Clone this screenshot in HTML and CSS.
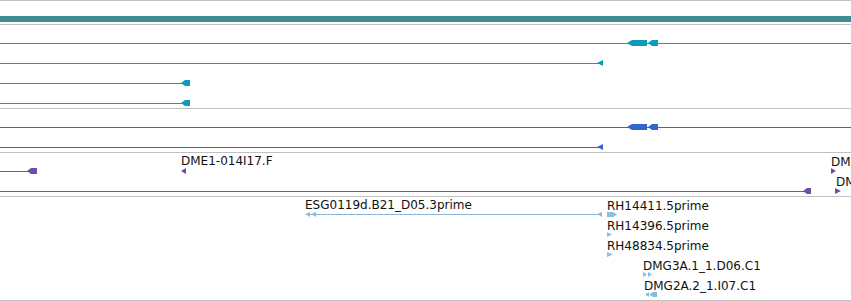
FILE: index.html
```html
<!DOCTYPE html>
<html lang="en">
<head>
    <meta charset="UTF-8">
    <title>Track view</title>
    <link rel="stylesheet" href="styles.css">
</head>
<body>
    <div class="tracks">
        <div class="track track-summary">
            <svg width="851" height="23">
                <rect class="summary-bar" x="0" y="15" width="851" height="6"/>
            </svg>
        </div>

        <div class="track track-teal">
            <svg width="851" height="83">
                <line class="teal-line" x1="0" y1="18.5" x2="851" y2="18.5"/>
                <polygon class="teal-fill" points="627,18 632,15 647,15 647,21 632,21"/>
                <polygon class="teal-fill" points="648,18 652,15 658,15 658,21 652,21"/>
                <line class="teal-line" x1="0" y1="38.5" x2="600" y2="38.5"/>
                <polygon class="teal-fill" points="597,38 603,35 603,41"/>
                <line class="teal-line" x1="0" y1="58.5" x2="186" y2="58.5"/>
                <polygon class="teal-fill" points="181,58 185,55 190,55 190,61 185,61"/>
                <line class="teal-line" x1="0" y1="78.5" x2="186" y2="78.5"/>
                <polygon class="teal-fill" points="181,78 185,75 190,75 190,81 185,81"/>
            </svg>
        </div>

        <div class="track track-blue">
            <svg width="851" height="43">
                <line class="blue-line" x1="0" y1="18.5" x2="851" y2="18.5"/>
                <polygon class="blue-fill" points="627,18 632,15 647,15 647,21 632,21"/>
                <polygon class="blue-fill" points="648,18 652,15 658,15 658,21 652,21"/>
                <line class="blue-line" x1="0" y1="38.5" x2="600" y2="38.5"/>
                <polygon class="blue-fill" points="597,38 603,35 603,41"/>
            </svg>
        </div>

        <div class="track track-purple">
            <svg width="851" height="43">
                <line class="purple-line" x1="0" y1="18.5" x2="30" y2="18.5"/>
                <polygon class="purple-fill" points="27,18 31,15 37,15 37,21 31,21"/>
                <text class="label" x="181" y="12">DME1-014I17.F</text>
                <polygon class="purple-fill" points="181,18 186,15 186,21"/>
                <text class="label" x="831" y="13">DM</text>
                <polygon class="purple-fill" points="831,15 836,18 831,21"/>
                <line class="purple-line" x1="0" y1="38.5" x2="806" y2="38.5"/>
                <polygon class="purple-fill" points="803,38 807,35 811,35 811,41 807,41"/>
                <text class="label" x="836" y="33">DM</text>
                <polygon class="purple-fill" points="835,35 841,38 835,41"/>
            </svg>
        </div>

        <div class="track track-est">
            <svg width="851" height="103">
                <text class="label" x="305" y="12">ESG0119d.B21_D05.3prime</text>
                <line class="est-line" x1="308" y1="17.5" x2="600" y2="17.5"/>
                <polygon class="est-fill" points="305,17 310,15 310,20"/>
                <polygon class="est-fill" points="311,17 316,15 316,20"/>
                <polygon class="est-fill" points="597,17 602,15 602,20"/>

                <text class="label" x="607" y="13">RH14411.5prime</text>
                <polygon class="est-fill" points="607,15 613,15 617,17.5 613,20 607,20"/>
                <text class="label" x="607" y="33">RH14396.5prime</text>
                <polygon class="est-fill" points="607,35 612,37.5 607,40"/>
                <text class="label" x="607" y="53">RH48834.5prime</text>
                <polygon class="est-fill" points="607,55 613,57.5 607,60"/>

                <text class="label" x="643" y="73">DMG3A.1_1.D06.C1</text>
                <polygon class="est-fill" points="643,75 647,77.5 643,80"/>
                <polygon class="est-fill" points="648,75 652,77.5 648,80"/>
                <text class="label" x="644" y="93">DMG2A.2_1.I07.C1</text>
                <polygon class="est-fill" points="645,97.5 649,95 649,100"/>
                <polygon class="est-fill" points="649,97.5 653,95 657,95 657,100 653,100"/>
            </svg>
        </div>
    </div>
</body>
</html>
```

FILE: styles.css
```css
body {
    margin: 0;
    background: #fff;
    font-family: "DejaVu Sans", sans-serif;
    overflow: hidden;
}
.tracks {
    width: 851px;
}
.track {
    border-top: 1px solid #c0c0c0;
}
.track:last-child {
    border-bottom: 1px solid #c0c0c0;
}
.track svg {
    display: block;
}
.summary-bar {
    fill: #408e91;
}
line {
    stroke-width: 1;
    shape-rendering: crispEdges;
}
.teal-line {
    stroke: #1d97b2;
}
.teal-fill {
    fill: #0b9bbd;
}
.blue-line {
    stroke: #3668c8;
}
.blue-fill {
    fill: #3366cc;
}
.purple-line {
    stroke: #7255a9;
}
.purple-fill {
    fill: #6e4fa8;
}
.est-line {
    stroke: #8ab6db;
}
.est-fill {
    fill: #8cbde0;
}
.label {
    font-family: "DejaVu Sans", sans-serif;
    font-size: 12px;
    fill: #111;
}
```
